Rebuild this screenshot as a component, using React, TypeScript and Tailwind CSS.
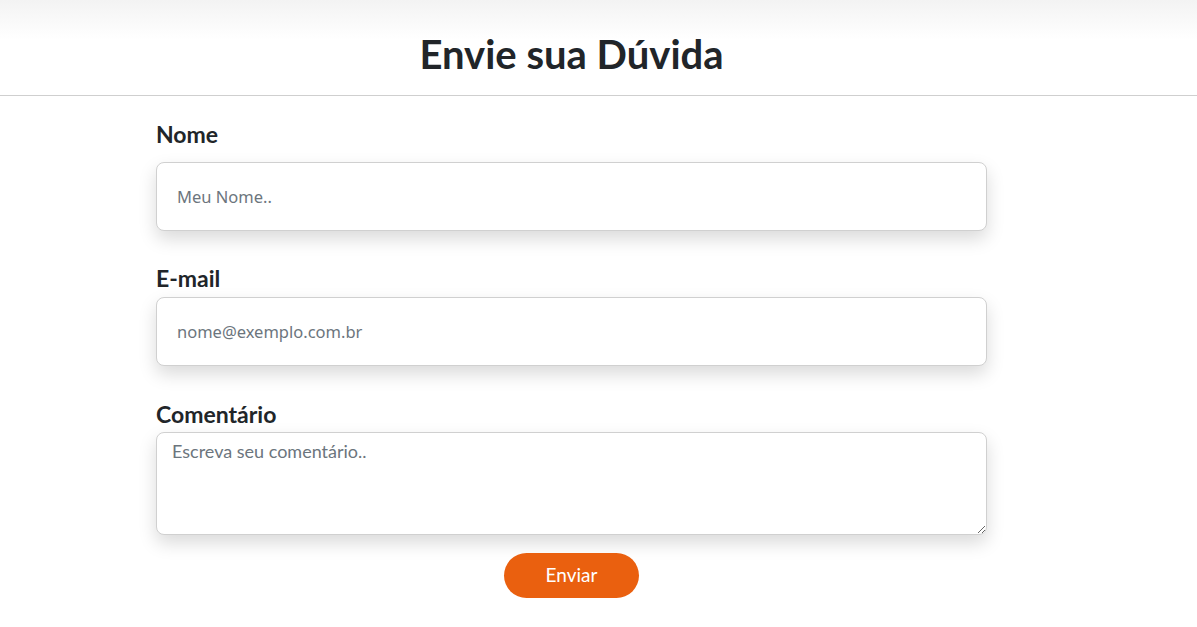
import { useState } from 'react';

export default function App() {
  const [nome, setNome] = useState('');
  const [email, setEmail] = useState('');
  const [comentario, setComentario] = useState('');

  return (
    <div className="min-h-screen bg-white text-[#212529] font-['Lato',sans-serif]">
      <header className="h-[96px] border-b border-[#cfcfcf] bg-[linear-gradient(to_bottom,#f3f3f3_0px,#ffffff_40px)]">
        <div className="ml-[156px] w-[831px] pt-[31px] text-center">
          <h1 className="text-[40px] font-bold leading-[46px]">Envie sua Dúvida</h1>
        </div>
      </header>

      <form className="ml-[156px] w-[831px] flex flex-col" onSubmit={(e) => e.preventDefault()}>
        <label className="mt-[25px] text-[23px] font-bold leading-[26px]">Nome</label>
        <input
          value={nome}
          onChange={(e) => setNome(e.target.value)}
          placeholder="Meu Nome.."
          className="mt-[15px] h-[69px] w-full rounded-lg border border-[#d0d0d0] bg-white px-[20px] text-[16.5px] font-['Noto_Sans',sans-serif] shadow-[0_8px_18px_rgba(0,0,0,0.15)] outline-none placeholder:text-[#6c757d]"
        />

        <label className="mt-[34px] text-[23px] font-bold leading-[26px]">E-mail</label>
        <input
          value={email}
          onChange={(e) => setEmail(e.target.value)}
          placeholder="nome@exemplo.com.br"
          className="mt-[6px] h-[69px] w-full rounded-lg border border-[#d0d0d0] bg-white px-[20px] text-[16.5px] font-['Noto_Sans',sans-serif] shadow-[0_8px_18px_rgba(0,0,0,0.15)] outline-none placeholder:text-[#6c757d]"
        />

        <label className="mt-[35px] text-[23px] font-bold leading-[26px]">Comentário</label>
        <textarea
          value={comentario}
          onChange={(e) => setComentario(e.target.value)}
          placeholder="Escreva seu comentário.."
          className="mt-[5px] h-[103px] w-full rounded-lg border border-[#d0d0d0] bg-white px-[15px] py-[7px] text-[18px] leading-[22px] shadow-[0_8px_18px_rgba(0,0,0,0.15)] outline-none placeholder:text-[#6c757d]"
        />

        <div className="mt-[18px] flex justify-center">
          <button className="h-[45px] w-[135px] rounded-full bg-[#ea600f] text-[19px] text-white">
            Enviar
          </button>
        </div>
      </form>
    </div>
  );
}
